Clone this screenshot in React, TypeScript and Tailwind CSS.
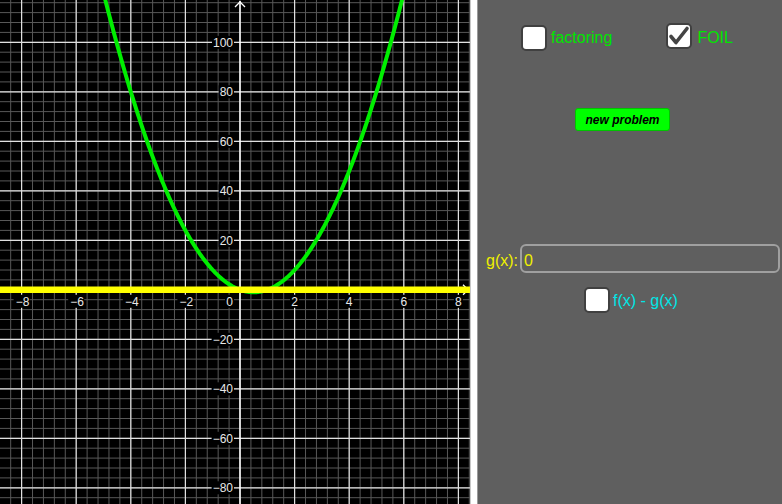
import React from "react";

const W = 470;
const H = 504;
const X0 = 240;
const SX = 27.3;
const Y0 = 289.8;
const SY = 2.475;

const px = (x: number) => X0 + x * SX;
const py = (y: number) => Y0 - y * SY;

function Graph() {
  const vMinor: number[] = [];
  for (let k = -30; k <= 30; k++) {
    const x = k * 0.4;
    const p = px(x);
    if (p >= 0 && p <= W) vMinor.push(p);
  }
  const hMinor: number[] = [];
  for (let k = -40; k <= 40; k++) {
    const y = k * 4;
    const p = py(y);
    if (p >= 0 && p <= H) hMinor.push(p);
  }
  const xMajor = [-8, -6, -4, -2, 2, 4, 6, 8];
  const yMajor = [-80, -60, -40, -20, 20, 40, 60, 80, 100];

  const pts: string[] = [];
  for (let i = 0; i <= 400; i++) {
    const x = -5.3 + (11.6 * i) / 400;
    const y = 4 * x * x - 4 * x;
    pts.push(`${px(x).toFixed(2)},${py(y).toFixed(2)}`);
  }

  const fmt = (n: number) => (n < 0 ? "\u2212" + Math.abs(n) : String(n));

  return (
    <svg width={W} height={H} viewBox={`0 0 ${W} ${H}`} className="block shrink-0 bg-black">
      {vMinor.map((p, i) => (
        <line key={"vm" + i} x1={p} y1={0} x2={p} y2={H} stroke="#585858" strokeWidth={1} />
      ))}
      {hMinor.map((p, i) => (
        <line key={"hm" + i} x1={0} y1={p} x2={W} y2={p} stroke="#585858" strokeWidth={1} />
      ))}
      {xMajor.map((x) => (
        <line key={"vM" + x} x1={px(x)} y1={0} x2={px(x)} y2={H} stroke="#e0e0e0" strokeWidth={1.2} />
      ))}
      {yMajor.map((y) => (
        <line key={"hM" + y} x1={0} y1={py(y)} x2={W} y2={py(y)} stroke="#e0e0e0" strokeWidth={1.2} />
      ))}
      {/* axes */}
      <line x1={X0} y1={1} x2={X0} y2={H} stroke="#ffffff" strokeWidth={1.6} />
      <line x1={0} y1={Y0} x2={W - 2} y2={Y0} stroke="#ffffff" strokeWidth={1.6} />
      <polyline points={`${X0 - 5},${7} ${X0},${2} ${X0 + 5},${7}`} fill="none" stroke="#ffffff" strokeWidth={1.3} />
      <polyline points={`${W - 7},${Y0 - 5} ${W - 2},${Y0} ${W - 7},${Y0 + 5}`} fill="none" stroke="#ffffff" strokeWidth={1.3} />

      {/* x labels */}
      {xMajor.map((x) => {
        const t = fmt(x);
        const w = t.length === 2 ? 14 : 7;
        return (
          <g key={"xl" + x}>
            <rect x={px(x) - w / 2 - 1} y={Y0 + 5} width={w + 2} height={13} fill="#000" />
            <text
              x={px(x) + (x < 0 ? 1 : 0)}
              y={Y0 + 16}
              fill="#e8e8e8"
              fontSize={12}
              textAnchor="middle"
              fontFamily="'Liberation Sans', Arial, sans-serif"
            >
              {t}
            </text>
          </g>
        );
      })}
      <rect x={225} y={Y0 + 5} width={9} height={13} fill="#000" />
      <text x={229.5} y={Y0 + 16} fill="#e8e8e8" fontSize={12} textAnchor="middle" fontFamily="'Liberation Sans', Arial, sans-serif">
        0
      </text>

      {/* y labels */}
      {yMajor.map((y) => {
        const t = fmt(y);
        const w = y < 0 ? 7 + 13.4 : t.length * 6.67;
        return (
          <g key={"yl" + y}>
            <rect x={233 - w - 1} y={py(y) - 6.5} width={w + 2} height={13} fill="#000" />
            <text
              x={233}
              y={py(y) + 4.3}
              fill="#e8e8e8"
              fontSize={12}
              textAnchor="end"
              fontFamily="'Liberation Sans', Arial, sans-serif"
            >
              {t}
            </text>
          </g>
        );
      })}

      {/* f(x) */}
      <polyline points={pts.join(" ")} fill="none" stroke="#00ee00" strokeWidth={4} strokeLinejoin="round" />
      {/* g(x) = 0 */}
      <line x1={0} y1={Y0} x2={W} y2={Y0} stroke="#ffff00" strokeWidth={6.5} />
    </svg>
  );
}

function Box({ checked, className }: { checked?: boolean; className?: string }) {
  return (
    <div
      className={
        "flex h-[26px] w-[26px] shrink-0 items-center justify-center rounded-[5px] border-2 border-[#404040] bg-white " +
        (className ?? "")
      }
    >
      {checked && (
        <svg width="22" height="22" viewBox="0 0 22 22">
          <polyline
            points="3,11.5 8,17.5 19,3.5"
            fill="none"
            stroke="#444444"
            strokeWidth={3.6}
            strokeLinecap="round"
            strokeLinejoin="round"
          />
        </svg>
      )}
    </div>
  );
}

export default function App() {
  return (
    <div
      className="flex h-[504px] w-[782px] overflow-hidden bg-[#5f5f5f]"
      style={{ fontFamily: "'Liberation Sans', Arial, sans-serif" }}
    >
      <Graph />
      <div className="h-full w-[8px] shrink-0 border-l border-r border-l-[#c8c8c8] border-r-[#9a9a9a] bg-white" />
      <div className="flex h-full flex-1 flex-col bg-[#5f5f5f]">
        <div className="mt-[23px] flex h-[28px] items-start">
          <div className="ml-[43px] mt-[2px] flex items-center">
            <Box />
            <span className="ml-[4px] text-[16px] leading-none text-[#00e600]">factoring</span>
          </div>
          <div className="ml-[54px] flex items-center">
            <Box checked />
            <span className="ml-[5px] mt-[4px] text-[16px] leading-none text-[#00e600]">FOIL</span>
          </div>
        </div>
        <div className="ml-[97px] mt-[57px] flex h-[23px] w-[95px] items-center justify-center rounded-[3px] border border-[#00c400] bg-[#00ff00]">
          <span className="text-[12px] font-bold italic leading-none text-black">new problem</span>
        </div>
        <div className="mt-[113px] flex h-[29px] items-center">
          <span className="ml-[8px] mt-[5px] text-[16px] leading-none text-[#f0f000]">g(x):</span>
          <div className="ml-[2px] flex h-[29px] w-[260px] items-center rounded-[6px] border-2 border-[#a0a0a0] pl-[2px]">
            <span className="mt-[5px] text-[16px] leading-none text-[#f0f000]">0</span>
          </div>
        </div>
        <div className="ml-[106px] mt-[14px] flex items-center">
          <Box />
          <span className="ml-[3px] mt-[2px] text-[16px] leading-none text-[#00e6e6]">f(x) - g(x)</span>
        </div>
      </div>
    </div>
  );
}
